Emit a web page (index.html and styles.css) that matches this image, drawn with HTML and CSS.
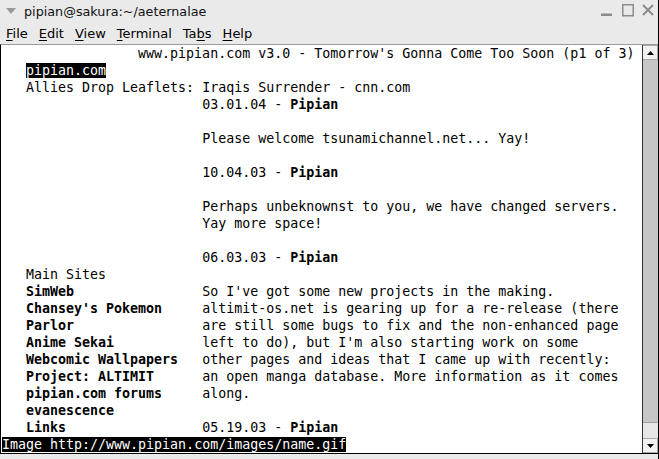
FILE: index.html
```html
<!DOCTYPE html>
<html lang="en">
<head>
  <meta charset="UTF-8">
  <title>pipian@sakura:~/aeternalae</title>
  <link rel="stylesheet" href="styles.css">
</head>
<body>
  <div id="window">
    <div class="titlebar">
      <svg class="winmenu" width="10" height="6" viewBox="0 0 10 6"><polygon points="0,0 10,0 5,6" fill="#999"/></svg>
      <span class="wintitle">pipian@sakura:~/aeternalae</span>
      <svg class="controls" width="57" height="22" viewBox="0 0 57 22">
        <rect x="2" y="13.5" width="11" height="2.5" fill="#8c8c8c"/>
        <rect x="23.75" y="4.75" width="10.5" height="11" fill="none" stroke="#8c8c8c" stroke-width="1.5"/>
        <path d="M44 5 L54 15 M54 5 L44 15" stroke="#8c8c8c" stroke-width="2" fill="none"/>
      </svg>
    </div>

    <div class="menubar">
      <span><u>F</u>ile</span>
      <span><u>E</u>dit</span>
      <span><u>V</u>iew</span>
      <span><u>T</u>erminal</span>
      <span>Ta<u>b</u>s</span>
      <span><u>H</u>elp</span>
    </div>

    <div class="term">
      <div class="screen">
        <div class="ln head">www.pipian.com v3.0 - Tomorrow's Gonna Come Too Soon (p1 of 3)</div>
        <div class="ln in3"><span class="inv">pipian.com</span></div>
        <div class="ln in3">Allies Drop Leaflets: Iraqis Surrender - cnn.com</div>
        <div class="ln in25">03.01.04 - <b>Pipian</b></div>
        <div class="ln"></div>
        <div class="ln in25">Please welcome tsunamichannel.net... Yay!</div>
        <div class="ln"></div>
        <div class="ln in25">10.04.03 - <b>Pipian</b></div>
        <div class="ln"></div>
        <div class="ln in25">Perhaps unbeknownst to you, we have changed servers.</div>
        <div class="ln in25">Yay more space!</div>
        <div class="ln"></div>
        <div class="ln in25">06.03.03 - <b>Pipian</b></div>
        <div class="ln in3">Main Sites</div>
        <div class="ln cols"><b>SimWeb</b><span>So I've got some new projects in the making.</span></div>
        <div class="ln cols"><b>Chansey's Pokemon</b><span>altimit-os.net is gearing up for a re-release (there</span></div>
        <div class="ln cols"><b>Parlor</b><span>are still some bugs to fix and the non-enhanced page</span></div>
        <div class="ln cols"><b>Anime Sekai</b><span>left to do), but I'm also starting work on some</span></div>
        <div class="ln cols"><b>Webcomic Wallpapers</b><span>other pages and ideas that I came up with recently:</span></div>
        <div class="ln cols"><b>Project: ALTIMIT</b><span>an open manga database. More information as it comes</span></div>
        <div class="ln cols"><b>pipian.com forums</b><span>along.</span></div>
        <div class="ln cols"><b>evanescence</b><span></span></div>
        <div class="ln cols"><b>Links</b><span>05.19.03 - <b>Pipian</b></span></div>
        <div class="ln"><span class="inv">Image http://www.pipian.com/images/name.gif</span></div>
      </div>

      <div class="scroll">
        <div class="sb-btn">
          <svg width="7" height="4" viewBox="0 0 7 4"><polygon points="0,4 7,4 3.5,0" fill="#000"/></svg>
        </div>
        <div class="sb-thumb"></div>
        <div class="sb-trough"></div>
        <div class="sb-btn">
          <svg width="7" height="4" viewBox="0 0 7 4"><polygon points="0,0 7,0 3.5,4" fill="#000"/></svg>
        </div>
      </div>
    </div>
  </div>
</body>
</html>
```

FILE: styles.css
```css
*{
  margin: 0;
  padding: 0;
  box-sizing: border-box;
}
body{
  width: 659px;
  height: 459px;
  background: #eaeaea;
  overflow: hidden;
}
#window{
  width: 659px;
  height: 459px;
  border-right: 1px solid #000;
  background: #eaeaea;
  font-family: "DejaVu Sans", Verdana, sans-serif;
  font-size: 12.75px;
  color: #111;
}

/* title bar */
.titlebar{
  height: 22px;
  display: flex;
  align-items: center;
  padding-left: 6px;
}
.winmenu{
  margin-right: 8px;
}
.controls{
  margin-left: auto;
  margin-right: 2px;
  align-self: flex-start;
}

/* menus */
.menubar{
  height: 22px;
  display: flex;
  align-items: center;
  gap: 11px;
  padding-left: 6px;
  font-size: 13px;
  color: #000;
}
.menubar u{
  text-decoration: underline;
  text-underline-offset: 2px;
}

/* terminal */
.term{
  display: flex;
  border-top: 1px solid #9a9a9a;
  border-bottom: 1px solid #000;
  border-left: 1px solid #000;
  background: #fff;
  height: 410px;
}
.screen{
  width: 641px;
  padding-left: 1px;
  font-family: "DejaVu Sans Mono", "Liberation Mono", monospace;
  font-size: 13.3px;
  color: #000;
}
.ln{
  height: 17px;
  line-height: 17px;
  white-space: pre;
}
.ln b{
  font-weight: bold;
}
.head{
  padding-left: 17ch;
}
.in3{
  padding-left: 3ch;
}
.in25{
  padding-left: 25ch;
}
.cols{
  display: grid;
  grid-template-columns: 22ch 1fr;
  padding-left: 3ch;
}
.inv{
  background: #000;
  color: #fff;
}

/* scrollbar */
.scroll{
  width: 16px;
  display: flex;
  flex-direction: column;
  border-left: 1px solid #333;
  background: #e4e4e4;
}
.sb-btn{
  height: 15px;
  background: #f2f2f2;
  border: 1px solid #a8a8a8;
  border-left: none;
  display: flex;
  align-items: center;
  justify-content: center;
}
.sb-thumb{
  height: 363px;
  background: #c6c6c6;
  border-bottom: 1px solid #a0a0a0;
}
.sb-trough{
  flex: 1;
  background: #e6e6e6;
}
```
